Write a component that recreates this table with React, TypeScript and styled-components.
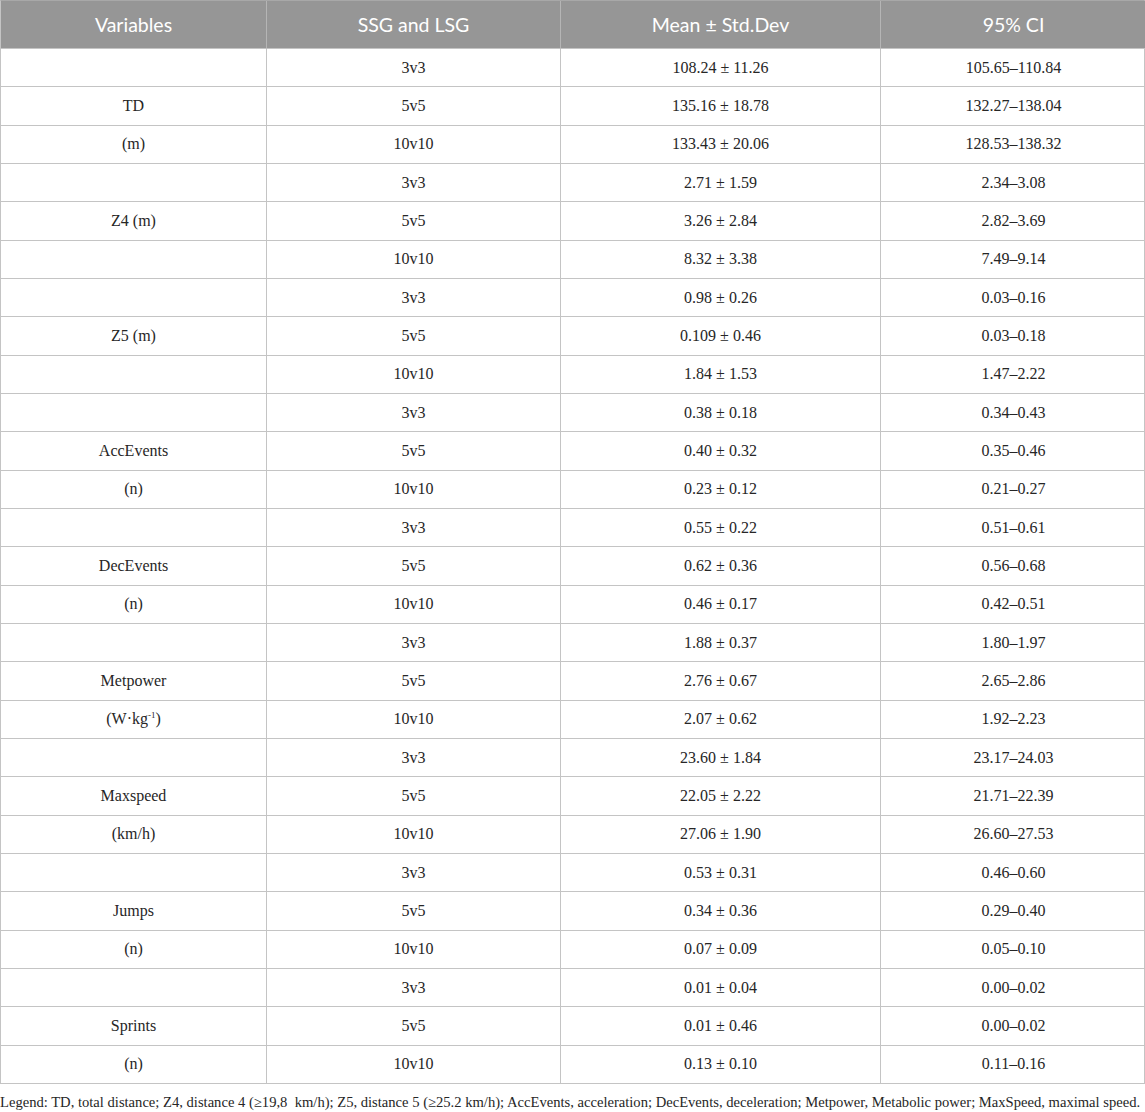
import React from "react";
import styled, { createGlobalStyle } from "styled-components";

const Global = createGlobalStyle`
  html, body { margin: 0; padding: 0; background: #ffffff; }
`;

const Page = styled.div`
  width: 1145px;
  font-family: "Liberation Serif", "Times New Roman", serif;
  color: #262626;
`;

const Grid = styled.div`
  display: grid;
  grid-template-columns: 266px 294px 320px 265px;
  grid-template-rows: 48px;
  grid-auto-rows: 38.33px;
  border-top: 1px solid #a8a8a8;
  border-left: 1px solid #c4c4c4;
  border-right: 1px solid #c4c4c4;
  box-sizing: border-box;
`;

const HeadCell = styled.div<{ $last?: boolean }>`
  display: flex;
  align-items: center;
  justify-content: center;
  background: #969696;
  color: #ffffff;
  font-family: Lato, "Open Sans", sans-serif;
  font-size: 19.5px;
  border-right: ${(p) => (p.$last ? "none" : "1px solid #b5b5b5")};
  border-bottom: 1px solid #c4c4c4;
  box-sizing: border-box;
`;

const Cell = styled.div<{ $last?: boolean }>`
  display: flex;
  align-items: center;
  justify-content: center;
  font-size: 16px;
  border-right: ${(p) => (p.$last ? "none" : "1px solid #c4c4c4")};
  border-bottom: 1px solid #c4c4c4;
  box-sizing: border-box;
  white-space: nowrap;
`;

const Sup = styled.sup`
  font-size: 9px;
  line-height: 0;
`;

const Legend = styled.p`
  margin: 0;
  padding-top: 8px;
  font-size: 14.6px;
  line-height: 20px;
  color: #262626;
  white-space: nowrap;
`;

type Row = { label: React.ReactNode; game: string; mean: string; ci: string };

const groups: { labels: React.ReactNode[]; data: [string, string, string][] }[] = [
  {
    labels: ["", "TD", "(m)"],
    data: [
      ["3v3", "108.24 ± 11.26", "105.65–110.84"],
      ["5v5", "135.16 ± 18.78", "132.27–138.04"],
      ["10v10", "133.43 ± 20.06", "128.53–138.32"],
    ],
  },
  {
    labels: ["", "Z4 (m)", ""],
    data: [
      ["3v3", "2.71 ± 1.59", "2.34–3.08"],
      ["5v5", "3.26 ± 2.84", "2.82–3.69"],
      ["10v10", "8.32 ± 3.38", "7.49–9.14"],
    ],
  },
  {
    labels: ["", "Z5 (m)", ""],
    data: [
      ["3v3", "0.98 ± 0.26", "0.03–0.16"],
      ["5v5", "0.109 ± 0.46", "0.03–0.18"],
      ["10v10", "1.84 ± 1.53", "1.47–2.22"],
    ],
  },
  {
    labels: ["", "AccEvents", "(n)"],
    data: [
      ["3v3", "0.38 ± 0.18", "0.34–0.43"],
      ["5v5", "0.40 ± 0.32", "0.35–0.46"],
      ["10v10", "0.23 ± 0.12", "0.21–0.27"],
    ],
  },
  {
    labels: ["", "DecEvents", "(n)"],
    data: [
      ["3v3", "0.55 ± 0.22", "0.51–0.61"],
      ["5v5", "0.62 ± 0.36", "0.56–0.68"],
      ["10v10", "0.46 ± 0.17", "0.42–0.51"],
    ],
  },
  {
    labels: [
      "",
      "Metpower",
      <span key="w">
        (W·kg<Sup>-1</Sup>)
      </span>,
    ],
    data: [
      ["3v3", "1.88 ± 0.37", "1.80–1.97"],
      ["5v5", "2.76 ± 0.67", "2.65–2.86"],
      ["10v10", "2.07 ± 0.62", "1.92–2.23"],
    ],
  },
  {
    labels: ["", "Maxspeed", "(km/h)"],
    data: [
      ["3v3", "23.60 ± 1.84", "23.17–24.03"],
      ["5v5", "22.05 ± 2.22", "21.71–22.39"],
      ["10v10", "27.06 ± 1.90", "26.60–27.53"],
    ],
  },
  {
    labels: ["", "Jumps", "(n)"],
    data: [
      ["3v3", "0.53 ± 0.31", "0.46–0.60"],
      ["5v5", "0.34 ± 0.36", "0.29–0.40"],
      ["10v10", "0.07 ± 0.09", "0.05–0.10"],
    ],
  },
  {
    labels: ["", "Sprints", "(n)"],
    data: [
      ["3v3", "0.01 ± 0.04", "0.00–0.02"],
      ["5v5", "0.01 ± 0.46", "0.00–0.02"],
      ["10v10", "0.13 ± 0.10", "0.11–0.16"],
    ],
  },
];

const rows: Row[] = groups.flatMap((g) =>
  g.data.map((d, i) => ({ label: g.labels[i], game: d[0], mean: d[1], ci: d[2] }))
);

export default function App() {
  return (
    <Page>
      <Global />
      <Grid>
        <HeadCell>Variables</HeadCell>
        <HeadCell>SSG and LSG</HeadCell>
        <HeadCell>Mean ± Std.Dev</HeadCell>
        <HeadCell $last>95% CI</HeadCell>
        {rows.map((r, i) => (
          <React.Fragment key={i}>
            <Cell>{r.label}</Cell>
            <Cell>{r.game}</Cell>
            <Cell>{r.mean}</Cell>
            <Cell $last>{r.ci}</Cell>
          </React.Fragment>
        ))}
      </Grid>
      <Legend>
        Legend: TD, total distance; Z4, distance 4 (≥19,8&nbsp; km/h); Z5, distance 5 (≥25.2 km/h); AccEvents,
        acceleration; DecEvents, deceleration; Metpower, Metabolic power; MaxSpeed, maximal speed.
      </Legend>
    </Page>
  );
}
